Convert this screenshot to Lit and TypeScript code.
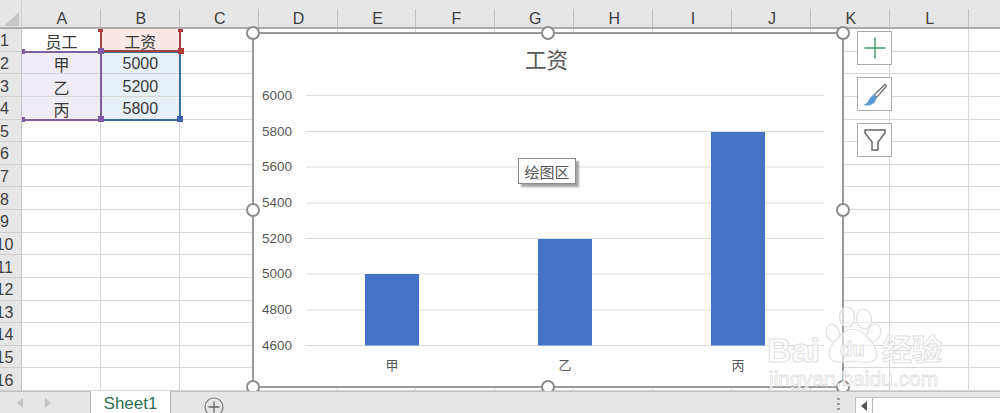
import { LitElement, html, css, svg } from "lit";
import { customElement } from "lit/decorators.js";

const COLS = "ABCDEFGHIJKL".split("");
const ROWS = Array.from({ length: 16 }, (_, i) => i + 1);
const CONTENT: Record<string, string> = {
  A1: "员工", B1: "工资",
  A2: "甲", B2: "5000",
  A3: "乙", B3: "5200",
  A4: "丙", B4: "5800",
};
const TINT: Record<string, string> = {
  B1: "pink", A2: "lav", A3: "lav", A4: "lav", B2: "blue", B3: "blue", B4: "blue",
};
const TICKS: [string, number][] = [
  ["6000", 95.5], ["5800", 131.5], ["5600", 167], ["5400", 203],
  ["5200", 238.5], ["5000", 274], ["4800", 310], ["4600", 345.5],
];
const BARS: [string, number, number][] = [
  ["甲", 365, 274], ["乙", 538, 239], ["丙", 711, 132],
];
const HANDLES: [number, number][] = [
  [253, 33], [548, 33], [843, 33], [253, 210], [843, 210], [253, 387], [548, 387], [843, 387],
];

@customElement("app-root")
export class AppRoot extends LitElement {
  static styles = css`
    :host {
      display: block;
      position: relative;
      width: 1000px;
      height: 413px;
      overflow: hidden;
      background: #fff;
      font-family: "Liberation Sans", "Noto Sans CJK SC", sans-serif;
      color: #3c3c3c;
    }
    .sheet {
      display: grid;
      grid-template-columns: 22px repeat(13, 78.9px);
      grid-template-rows: 29px repeat(16, 22.63px);
      height: 391px;
      overflow: hidden;
    }
    .corner, .colh {
      background: #e6e6e6;
      border-bottom: 2px solid #ababab;
      box-sizing: border-box;
    }
    .corner { position: relative; border-right: 1px solid #d0d0d0; }
    .tri {
      position: absolute;
      left: 4px;
      top: 12px;
      width: 15px;
      height: 14px;
      background: #c6c6c6;
      clip-path: polygon(100% 0, 100% 100%, 0 100%);
    }
    .colh {
      display: flex;
      align-items: flex-end;
      justify-content: center;
      padding-left: 1px;
      font-size: 16px;
      line-height: 17px;
      position: relative;
      color: #404040;
    }
    .colh::after {
      content: "";
      position: absolute;
      right: 0;
      top: 9px;
      bottom: 0;
      width: 1px;
      background: #c0c0c0;
    }
    .rowh {
      background: #e6e6e6;
      border-right: 1px solid #c4c4c4;
      border-bottom: 1px solid #cfcfcf;
      box-sizing: border-box;
      display: flex;
      align-items: center;
      justify-content: center;
      padding: 3px 12px 0 0;
      font-size: 16px;
      overflow: hidden;
      color: #404040;
    }
    .cell {
      box-sizing: border-box;
      border-right: 1px solid #d6d6d6;
      border-bottom: 1px solid #d6d6d6;
      display: flex;
      align-items: center;
      justify-content: center;
      padding: 3px 0 0 1px;
      font-size: 16px;
      color: #3a3a3a;
      white-space: nowrap;
    }
    .pink { background: #f9e8e6; }
    .lav { background: #f0ecf6; }
    .blue { background: #e7eff8; }

    .range { position: absolute; box-sizing: border-box; pointer-events: none; }
    .r-red { left: 100px; top: 29px; width: 81px; height: 23px; border: 2px solid #a5403f; border-top: none; }
    .r-pur { left: 23px; top: 51px; width: 79px; height: 70px; border: 2px solid #7f5e9c; border-left: none; }
    .r-blu { left: 101px; top: 51px; width: 80px; height: 70px; border: 2px solid #3f6b99; border-left: none; }
    .dot { position: absolute; width: 5px; height: 5px; }
    .dot.big { width: 6px; height: 6px; }
    .red { background: #b03a3a; }
    .pur { background: #7f5aa5; }
    .bl { background: #3d62ab; }

    .chart {
      position: absolute;
      left: 252px;
      top: 32px;
      width: 592px;
      height: 356px;
      background: #fff;
      border: 2px solid #9a9a9a;
      box-sizing: border-box;
    }
    .chart-svg { position: absolute; left: 0; top: 0; width: 1000px; height: 413px; pointer-events: none; }
    .title { font: 21.5px "Noto Sans CJK SC", sans-serif; fill: #595959; }
    .tick { font: 13.5px "Liberation Sans", sans-serif; fill: #595959; }
    .cat { font: 13px "Noto Sans CJK SC", sans-serif; fill: #595959; }

    .tip {
      position: absolute;
      left: 518px;
      top: 158px;
      width: 58px;
      height: 26px;
      box-sizing: border-box;
      background: #fff;
      border: 1px solid #8c8c8c;
      box-shadow: 3px 3px 2px #a4a4a4;
      display: flex;
      align-items: center;
      justify-content: center;
      font: 15px "Noto Sans CJK SC", sans-serif;
      color: #555;
    }
    .tools {
      position: absolute;
      left: 857px;
      top: 31px;
      display: flex;
      flex-direction: column;
      gap: 12px;
    }
    .tool {
      width: 35px;
      height: 34px;
      box-sizing: border-box;
      background: #fff;
      border: 1px solid #ababab;
      display: flex;
      align-items: center;
      justify-content: center;
    }
    .bottom {
      height: 22px;
      box-sizing: border-box;
      background: #e6e6e6;
      border-top: 1px solid #c2c2c2;
      display: flex;
      align-items: stretch;
      position: relative;
    }
    .nav {
      width: 90px;
      box-sizing: border-box;
      display: flex;
      align-items: center;
      gap: 20px;
      padding-left: 16px;
    }
    .tab {
      width: 81px;
      margin-top: -1px;
      padding-top: 3px;
      box-sizing: border-box;
      background: #fff;
      border-left: 1px solid #b4b4b4;
      border-right: 1px solid #b4b4b4;
      color: #2f6f55;
      font-size: 17px;
      display: flex;
      align-items: center;
      justify-content: center;
    }
    .add { margin-left: 33px; display: flex; align-items: flex-start; padding-top: 5px; }
    .grip {
      position: absolute;
      left: 837px;
      top: 6px;
      width: 3px;
      height: 14px;
      background: repeating-linear-gradient(#9c9c9c 0 2px, transparent 2px 5px);
    }
    .scroll {
      position: absolute;
      left: 855px;
      top: 5px;
      right: 0;
      bottom: 0;
      display: flex;
      background: #fff;
      border-top: 1px solid #c4c4c4;
    }
    .sbtn {
      width: 18px;
      border-right: 1px solid #b4b4b4;
      border-left: 1px solid #c4c4c4;
      box-sizing: border-box;
      display: flex;
      align-items: center;
      justify-content: center;
    }
    .mark { position: absolute; left: 0; top: 0; width: 1000px; height: 413px; pointer-events: none; }
    .wm {
      font-family: "Liberation Sans", sans-serif;
      fill: #ffffff;
      fill-opacity: 0.75;
      stroke: #e0e0e0;
      stroke-width: 1;
    }
    .wm.big { font-size: 34px; font-weight: 700; }
    .wm.cn { font: 700 30px "Noto Sans CJK SC", sans-serif; }
    .wm.url { font-size: 21px; stroke-width: 0.8; }
    .wm.du { font-size: 20px; font-weight: 700; }
  `;

  private cells() {
    const out = [html`<div class="corner"><div class="tri"></div></div>`];
    for (const c of COLS) out.push(html`<div class="colh">${c}</div>`);
    out.push(html`<div class="colh"></div>`);
    for (const r of ROWS) {
      out.push(html`<div class="rowh">${r}</div>`);
      for (const c of COLS) {
        const k = c + r;
        out.push(html`<div class="cell ${TINT[k] ?? ""}">${CONTENT[k] ?? ""}</div>`);
      }
      out.push(html`<div class="cell"></div>`);
    }
    return out;
  }

  private chart() {
    return svg`
      <text class="title" x="546.5" y="68" text-anchor="middle">工资</text>
      ${TICKS.map(([t, y]) => svg`
        <text class="tick" x="262" y=${y + 4}>${t}</text>
        <line x1="306" x2="824" y1=${y} y2=${y} stroke="#dcdcdc" stroke-width="1"></line>
      `)}
      ${BARS.map(([l, x, top]) => svg`
        <rect x=${x} y=${top} width="54" height=${345.5 - top} fill="#4472c4"></rect>
        <text class="cat" x=${x + 27} y="370" text-anchor="middle">${l}</text>
      `)}
      ${HANDLES.map(([x, y]) => svg`
        <circle cx=${x} cy=${y} r="6" fill="#fff" stroke="#8c8c8c" stroke-width="2"></circle>
      `)}
    `;
  }

  render() {
    return html`
      <div class="sheet">${this.cells()}</div>

      <div class="range r-pur"></div>
      <div class="range r-blu"></div>
      <div class="range r-red"></div>
      <div class="dot red" style="left:98px;top:29px;height:3px"></div>
      <div class="dot red" style="left:178px;top:29px;height:3px"></div>
      <div class="dot pur" style="left:22px;top:49px;width:3px"></div>
      <div class="dot pur big" style="left:98px;top:48px"></div>
      <div class="dot red big" style="left:178px;top:48px"></div>
      <div class="dot pur" style="left:22px;top:117px;width:3px"></div>
      <div class="dot pur big" style="left:98px;top:116px"></div>
      <div class="dot bl big" style="left:177px;top:116px"></div>

      <div class="chart"></div>
      <svg class="chart-svg" viewBox="0 0 1000 413">${this.chart()}</svg>
      <div class="tip">绘图区</div>

      <div class="tools">
        <div class="tool">
          <svg width="24" height="24" viewBox="0 0 24 24">
            <path d="M12 1.5v21M1.5 12h21" stroke="#3f9a68" stroke-width="1.4" fill="none"></path>
          </svg>
        </div>
        <div class="tool">
          <svg width="26" height="26" viewBox="0 0 26 26">
            <path d="M23 3.5 L12 14 L14.6 16.4 L24.5 5 Z" fill="#fff" stroke="#6d6d6d" stroke-width="1.3" stroke-linejoin="round"></path>
            <path d="M1.5 23.5 C5.5 23.5 6 19.5 8 17 C9.5 15 11 14 12 14 L14.6 16.4 C14.5 19 12 23 8.5 24 C6 24.7 3 24.6 1.5 23.5 Z" fill="#5b9bd5"></path>
          </svg>
        </div>
        <div class="tool">
          <svg width="24" height="24" viewBox="0 0 24 24">
            <path d="M2 2h20v3l-7 9v8h-6v-8l-7-9z" fill="#fff" stroke="#666" stroke-width="1.5" stroke-linejoin="miter"></path>
          </svg>
        </div>
      </div>

      <div class="bottom">
        <div class="nav">
          <svg width="8" height="10" viewBox="0 0 8 10"><path d="M7 0v10L1 5z" fill="#c4c4c4"></path></svg>
          <svg width="8" height="10" viewBox="0 0 8 10"><path d="M1 0v10l6-5z" fill="#c4c4c4"></path></svg>
        </div>
        <div class="tab">Sheet1</div>
        <div class="add">
          <svg width="20" height="20" viewBox="0 0 20 20">
            <circle cx="10" cy="10" r="9" fill="none" stroke="#777" stroke-width="1.2"></circle>
            <path d="M10 4.5v11M4.5 10h11" stroke="#666" stroke-width="1.3"></path>
          </svg>
        </div>
        <div class="grip"></div>
        <div class="scroll">
          <div class="sbtn">
            <svg width="7" height="10" viewBox="0 0 7 10"><path d="M6 0v10L0 5z" fill="#555"></path></svg>
          </div>
        </div>
      </div>

      <svg class="mark" viewBox="0 0 1000 413">
        <g fill="#fff" fill-opacity="0.6" stroke="#e0e0e0" stroke-width="1.2">
          <ellipse cx="847" cy="317" rx="7.5" ry="10"></ellipse>
          <ellipse cx="864" cy="319" rx="7.5" ry="10" transform="rotate(-12 864 319)"></ellipse>
          <ellipse cx="833" cy="333" rx="6.5" ry="9" transform="rotate(-20 833 333)"></ellipse>
          <ellipse cx="874" cy="333" rx="6.5" ry="9" transform="rotate(20 874 333)"></ellipse>
          <path d="M853 329 C864 329 877 347 877 354 C877 364 866 363 853 361 C840 363 828 364 829 352 C830 345 843 329 853 329 Z"></path>
        </g>
        <text class="wm du" x="840" y="356">du</text>
        <text class="wm big" x="767" y="362">Bai</text>
        <text class="wm cn" x="882" y="360">经验</text>
        <text class="wm url" x="769" y="386">jingyan.baidu.com</text>
      </svg>
    `;
  }
}
